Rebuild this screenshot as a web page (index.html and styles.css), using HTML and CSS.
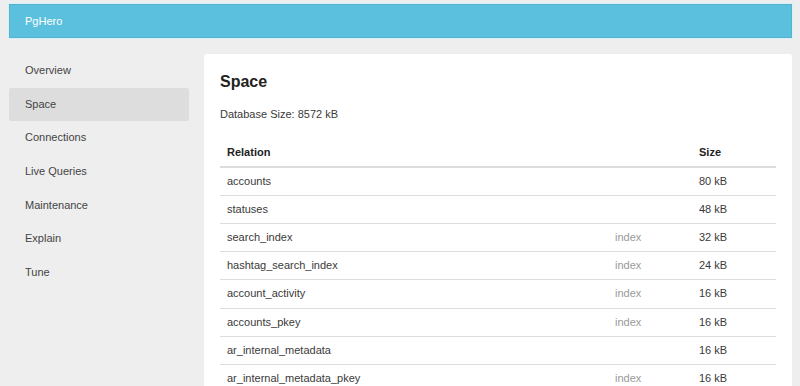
FILE: index.html
```html
<!DOCTYPE html>
<html>
<head>
<meta charset="utf-8">
<title>PgHero</title>
<link rel="stylesheet" href="styles.css">
</head>
<body>
<header class="topbar">PgHero</header>
<div class="layout">
  <nav class="sidebar">
    <a class="nav-item">Overview</a>
    <a class="nav-item active">Space</a>
    <a class="nav-item">Connections</a>
    <a class="nav-item">Live Queries</a>
    <a class="nav-item">Maintenance</a>
    <a class="nav-item">Explain</a>
    <a class="nav-item">Tune</a>
  </nav>
  <main class="card">
    <h1 class="title">Space</h1>
    <p class="dbsize">Database Size: 8572 kB</p>
    <table class="space-table">
      <thead>
        <tr><th class="col-rel">Relation</th><th class="col-type"></th><th class="col-size">Size</th></tr>
      </thead>
      <tbody>
        <tr><td>accounts</td><td class="type"></td><td>80 kB</td></tr>
        <tr><td>statuses</td><td class="type"></td><td>48 kB</td></tr>
        <tr><td>search_index</td><td class="type">index</td><td>32 kB</td></tr>
        <tr><td>hashtag_search_index</td><td class="type">index</td><td>24 kB</td></tr>
        <tr><td>account_activity</td><td class="type">index</td><td>16 kB</td></tr>
        <tr><td>accounts_pkey</td><td class="type">index</td><td>16 kB</td></tr>
        <tr><td>ar_internal_metadata</td><td class="type"></td><td>16 kB</td></tr>
        <tr><td>ar_internal_metadata_pkey</td><td class="type">index</td><td>16 kB</td></tr>
      </tbody>
    </table>
  </main>
</div>
</body>
</html>
```
FILE: styles.css
```css
html, body {
  margin: 0;
  background: #eeeeee;
}
body {
  padding: 4px 8px 0 9px;
  font-family: "Liberation Sans", Arial, sans-serif;
  font-size: 11px;
  color: #3a3a3a;
}
.topbar {
  height: 32px;
  line-height: 32px;
  background: #5bc0de;
  border: 1px solid #55b3cf;
  box-shadow: 0 0 0 1px #d8f1f9;
  color: #fff;
  padding-left: 15px;
  font-size: 11px;
}
.layout {
  display: flex;
  gap: 15px;
  margin-top: 16px;
  align-items: flex-start;
}
.sidebar {
  width: 180px;
  flex: none;
  display: flex;
  flex-direction: column;
}
.nav-item {
  display: block;
  padding: 10px 16px;
  line-height: 13.67px;
  color: #444;
  border-radius: 2px;
}
.nav-item.active {
  background: #dddddd;
}
.card {
  flex: 1;
  background: #fff;
  border-radius: 3px;
  padding: 17px 16px 20px;
  min-height: 400px;
}
.title {
  margin: 0;
  font-size: 16px;
  line-height: 22px;
  font-weight: bold;
  color: #222;
}
.dbsize {
  margin: 15px 0 18px;
  line-height: 13px;
}
.space-table {
  width: 100%;
  border-collapse: collapse;
}
.space-table th,
.space-table td {
  text-align: left;
  padding: 7px 7px;
  line-height: 13.1px;
}
.space-table th {
  font-weight: bold;
  color: #222;
  border-bottom: 2px solid #dddddd;
}
.space-table td {
  border-top: 1px solid #dddddd;
}
.space-table tbody tr:first-child td {
  border-top: none;
}
.col-rel { width: auto; }
.col-type { width: 70px; }
.col-size { width: 70px; }
.type {
  color: #999;
}
```
